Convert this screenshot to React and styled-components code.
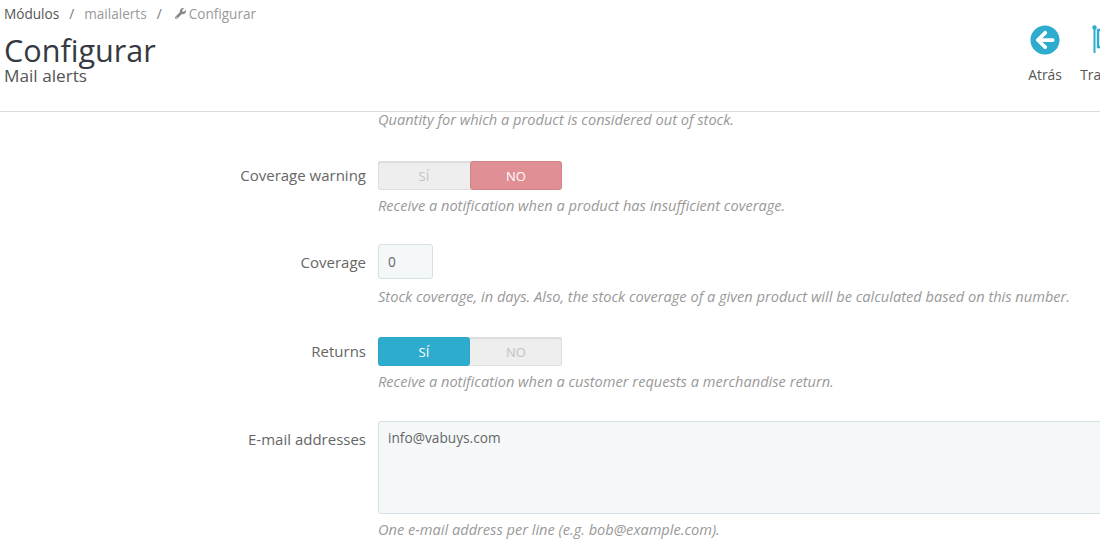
import React from "react";
import styled, { createGlobalStyle } from "styled-components";
import { FaWrench, FaArrowCircleLeft } from "react-icons/fa";

const Global = createGlobalStyle`
  html, body { margin: 0; padding: 0; background: #fff; }
  body { width: 1100px; height: 554px; overflow: hidden; font-family: "Open Sans", sans-serif; color: #666; }
`;

const Page = styled.div`
  width: 1100px;
  height: 554px;
  overflow: hidden;
`;

const Header = styled.header`
  box-sizing: border-box;
  height: 112px;
  border-bottom: 1px solid #dcdcdc;
  padding: 4px 0 0 4px;
  display: flex;
  justify-content: space-between;
`;

const TitleBlock = styled.div`
  display: flex;
  flex-direction: column;
`;

const Crumbs = styled.div`
  display: flex;
  align-items: center;
  font-size: 13.6px;
  line-height: 19px;
  color: #999;
`;

const CrumbRoot = styled.span`
  color: #555;
`;

const Sep = styled.span`
  margin: 0 10px;
  color: #777;
`;

const CrumbIcon = styled(FaWrench)`
  width: 11px;
  height: 11px;
  margin: 0 3px 0 3px;
  color: #888;
`;

const Title = styled.h1`
  margin: 9px 0 0;
  font-size: 30.6px;
  font-weight: 400;
  line-height: 36px;
  color: #363a41;
`;

const Subtitle = styled.h2`
  margin: -2px 0 0;
  font-size: 17.2px;
  font-weight: 400;
  line-height: 20px;
  color: #555;
`;

const Toolbar = styled.nav`
  display: flex;
  flex: none;
  width: 86px;
  overflow: hidden;
  padding-top: 20px;
  box-sizing: border-box;
`;

const Tool = styled.div`
  flex: none;
  width: 62px;
  display: flex;
  flex-direction: column;
  align-items: center;
  font-size: 13.8px;
  line-height: 18px;
  color: #555;
`;

const ToolIcon = styled.div`
  height: 42px;
  width: 30px;
  color: #2eacce;
  font-size: 30px;
  line-height: 0;
  padding-top: 1px;
  box-sizing: border-box;
`;

const Form = styled.main`
  padding-top: 0;
`;

const Row = styled.section`
  display: grid;
  grid-template-columns: 366px 1fr;
  column-gap: 12px;
  margin-bottom: ${p => p.$gap}px;
`;

const Label = styled.label`
  text-align: right;
  font-size: 15px;
  line-height: 20px;
  color: #666;
  padding-top: ${p => p.$top}px;
`;

const Control = styled.div`
  min-width: 0;
`;

const Hint = styled.p`
  margin: ${p => p.$top}px 0 0;
  font-size: 14.6px;
  font-style: italic;
  line-height: 18px;
  color: #999;
  white-space: nowrap;
`;

const Switch = styled.div`
  display: flex;
  width: 184px;
  height: 29px;
  border-radius: 3px;
  background: #eee;
  box-shadow: inset 0 0 0 1px #dedede, inset 0 1px 0 1px #dcdcdc;
`;

const Option = styled.div`
  flex: 1;
  display: flex;
  align-items: center;
  justify-content: center;
  font-size: 13px;
  font-weight: 400;
  border-radius: 3px;
  color: ${p => (p.$on ? "#fff" : "#c2c2c2")};
  background: ${p => (p.$on ? p.$color : "transparent")};
  border: ${p => (p.$on ? `1px solid ${p.$edge}` : "1px solid transparent")};
  box-sizing: border-box;
`;

const NumberInput = styled.div`
  box-sizing: border-box;
  width: 55px;
  height: 35px;
  padding: 0 9px;
  display: flex;
  align-items: center;
  font-size: 13.7px;
  color: #666;
  background: #f5f8f9;
  border: 1px solid #d6e0e4;
  border-radius: 3px;
`;

const TextArea = styled.div`
  box-sizing: border-box;
  width: 760px;
  height: 93px;
  padding: 7px 9px;
  font-size: 13.7px;
  line-height: 18px;
  color: #666;
  background: #f5f8f9;
  border: 1px solid #d6e0e4;
  border-radius: 3px;
`;

const FlagIcon = () => (
  <svg width="30" height="30" viewBox="0 0 30 30" fill="#2eacce">
    <circle cx="2.5" cy="2.5" r="2.2" />
    <rect x="1.5" y="2" width="2" height="26" />
    <path d="M6 5h20v17H6z" fill="none" stroke="#2eacce" strokeWidth="2.4" />
  </svg>
);

const Toggle = ({ on }) => (
  <Switch>
    <Option $on={on === "yes"} $color="#2eacce" $edge="#2ba6c8">SÍ</Option>
    <Option $on={on === "no"} $color="#e08f95" $edge="#d4838a">NO</Option>
  </Switch>
);

export default function App() {
  return (
    <Page>
      <Global />
      <Header>
        <TitleBlock>
          <Crumbs>
            <CrumbRoot>Módulos</CrumbRoot>
            <Sep>/</Sep>
            mailalerts
            <Sep>/</Sep>
            <CrumbIcon />
            Configurar
          </Crumbs>
          <Title>Configurar</Title>
          <Subtitle>Mail alerts</Subtitle>
        </TitleBlock>
        <Toolbar>
          <Tool>
            <ToolIcon><FaArrowCircleLeft /></ToolIcon>
            Atrás
          </Tool>
          <Tool>
            <ToolIcon><FlagIcon /></ToolIcon>
            Traducir
          </Tool>
        </Toolbar>
      </Header>
      <Form>
        <Row $gap={33}>
          <span />
          <Control><Hint $top={-2}>Quantity for which a product is considered out of stock.</Hint></Control>
        </Row>
        <Row $gap={30}>
          <Label $top={4}>Coverage warning</Label>
          <Control>
            <Toggle on="no" />
            <Hint $top={6}>Receive a notification when a product has insufficient coverage.</Hint>
          </Control>
        </Row>
        <Row $gap={32}>
          <Label $top={8}>Coverage</Label>
          <Control>
            <NumberInput>0</NumberInput>
            <Hint $top={8}>Stock coverage, in days. Also, the stock coverage of a given product will be calculated based on this number.</Hint>
          </Control>
        </Row>
        <Row $gap={31}>
          <Label $top={4}>Returns</Label>
          <Control>
            <Toggle on="yes" />
            <Hint $top={6}>Receive a notification when a customer requests a merchandise return.</Hint>
          </Control>
        </Row>
        <Row $gap={0}>
          <Label $top={8}>E-mail addresses</Label>
          <Control>
            <TextArea>info@vabuys.com</TextArea>
            <Hint $top={6}>One e-mail address per line (e.g. bob@example.com).</Hint>
          </Control>
        </Row>
      </Form>
    </Page>
  );
}
